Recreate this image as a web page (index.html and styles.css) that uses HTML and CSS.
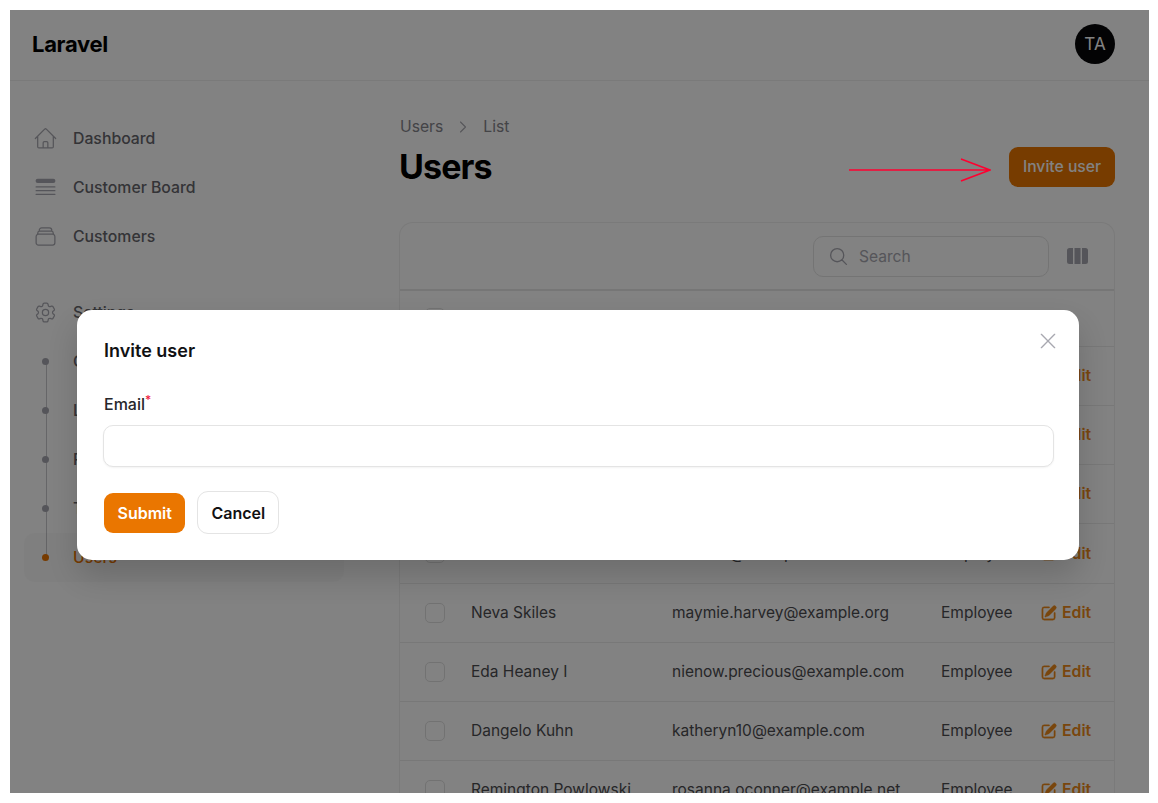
FILE: index.html
```html
<!DOCTYPE html>
<html lang="en">
  <head>
    <meta charset="UTF-8" />
    <meta name="viewport" content="width=device-width, initial-scale=1.0" />
    <title>Users</title>
    <link rel="stylesheet" href="styles.css">
  </head>
  <body>
    <div class="frame">
      <header class="topbar">
        <span class="brand">Laravel</span>
        <span class="avatar">TA</span>
      </header>

      <div class="shell">
        <nav class="sidebar">
          <ul class="nav-group">
            <li class="nav-item">
              <svg class="nav-icon" viewBox="0 0 24 24" fill="none" stroke="currentColor" stroke-width="1.2" stroke-linecap="round" stroke-linejoin="round"><path d="M2.25 12l8.954-8.955c.44-.439 1.152-.439 1.591 0L21.75 12M4.5 9.75v10.125c0 .621.504 1.125 1.125 1.125H9.75v-4.875c0-.621.504-1.125 1.125-1.125h2.25c.621 0 1.125.504 1.125 1.125V21h4.125c.621 0 1.125-.504 1.125-1.125V9.75M8.25 21h8.25"/></svg>
              Dashboard
            </li>
            <li class="nav-item">
              <svg class="nav-icon" viewBox="0 0 24 24" fill="none" stroke="currentColor" stroke-width="1.2" stroke-linecap="round"><rect x="2.5" y="3.5" width="19" height="4.2" rx="2" fill="currentColor" stroke="none"/><path d="M3 11.5h18M3 15h18M3 18.6h18"/></svg>
              Customer Board
            </li>
            <li class="nav-item">
              <svg class="nav-icon" viewBox="0 0 24 24" fill="none" stroke="currentColor" stroke-width="1.2" stroke-linecap="round" stroke-linejoin="round"><path d="M6 6.878V6a2.25 2.25 0 012.25-2.25h7.5A2.25 2.25 0 0118 6v.878m-12 0c.235-.083.487-.128.75-.128h10.5c.263 0 .515.045.75.128m-12 0A2.25 2.25 0 004.5 9v.878m13.5-3A2.25 2.25 0 0119.5 9v.878m0 0a2.246 2.246 0 00-.75-.128H5.25c-.263 0-.515.045-.75.128m15 0A2.25 2.25 0 0121 12v6a2.25 2.25 0 01-2.25 2.25H5.25A2.25 2.25 0 013 18v-6c0-.98.626-1.813 1.5-2.122"/></svg>
              Customers
            </li>
          </ul>

          <ul class="nav-group settings">
            <li class="nav-item">
              <svg class="nav-icon" viewBox="0 0 24 24" fill="none" stroke="currentColor" stroke-width="1.2" stroke-linecap="round" stroke-linejoin="round"><path d="M9.594 3.94c.09-.542.56-.94 1.11-.94h2.593c.55 0 1.02.398 1.11.94l.213 1.281c.063.374.313.686.645.87.074.04.147.083.22.127.324.196.72.257 1.075.124l1.217-.456a1.125 1.125 0 011.37.49l1.296 2.247a1.125 1.125 0 01-.26 1.431l-1.003.827c-.293.24-.438.613-.431.992a6.759 6.759 0 010 .255c-.007.378.138.75.43.99l1.005.828c.424.35.534.954.26 1.43l-1.298 2.247a1.125 1.125 0 01-1.369.491l-1.217-.456c-.355-.133-.75-.072-1.076.124a6.57 6.57 0 01-.22.128c-.331.183-.581.495-.644.869l-.213 1.28c-.09.543-.56.941-1.11.941h-2.594c-.55 0-1.02-.398-1.11-.94l-.213-1.281c-.062-.374-.312-.686-.644-.87a6.52 6.52 0 01-.22-.127c-.325-.196-.72-.257-1.076-.124l-1.217.456a1.125 1.125 0 01-1.369-.49l-1.297-2.247a1.125 1.125 0 01.26-1.431l1.004-.827c.292-.24.437-.613.43-.992a6.932 6.932 0 010-.255c.007-.378-.138-.75-.43-.99l-1.004-.828a1.125 1.125 0 01-.26-1.43l1.297-2.247a1.125 1.125 0 011.37-.491l1.216.456c.356.133.751.072 1.076-.124.072-.044.146-.087.22-.128.332-.183.582-.495.644-.869l.214-1.281z"/><path d="M15 12a3 3 0 11-6 0 3 3 0 016 0z"/></svg>
              Settings
            </li>
            <li>
              <ul class="sub-list">
                <li class="sub-item"><span class="dot"></span>Categories</li>
                <li class="sub-item"><span class="dot"></span>Languages</li>
                <li class="sub-item"><span class="dot"></span>Permissions</li>
                <li class="sub-item"><span class="dot"></span>Teams</li>
                <li class="sub-item active"><span class="dot"></span>Users</li>
              </ul>
            </li>
          </ul>
        </nav>

        <main class="content">
          <div class="crumbs">
            <span>Users</span>
            <svg class="crumb-sep" viewBox="0 0 24 24" fill="none" stroke="currentColor" stroke-width="1.6" stroke-linecap="round" stroke-linejoin="round"><path d="M8.25 4.5l7.5 7.5-7.5 7.5"/></svg>
            <span>List</span>
          </div>
          <div class="page-head">
            <h1>Users</h1>
            <button class="btn btn-primary btn-head">Invite user</button>
          </div>

          <section class="card">
            <div class="toolbar">
              <div class="search">
                <svg class="search-icon" viewBox="0 0 24 24" fill="none" stroke="currentColor" stroke-width="1.5" stroke-linecap="round" stroke-linejoin="round"><path d="M21 21l-5.197-5.197m0 0A7.5 7.5 0 105.196 5.196a7.5 7.5 0 0010.607 10.607z"/></svg>
                <span>Search</span>
              </div>
              <svg class="columns-icon" viewBox="0 0 21 16" fill="currentColor"><path d="M2.5 0H6v16H2.5A2.5 2.5 0 010 13.500V2.500A2.500 2.500 0 012.500 0z"/><rect x="7.500" width="6" height="16"/><path d="M15 0h3.500A2.500 2.500 0 0121 2.500v11a2.500 2.500 0 01-2.500 2.500H15z"/></svg>
            </div>
            <table class="users">
              <colgroup>
                <col class="col-check" />
                <col class="col-name" />
                <col class="col-email" />
                <col class="col-role" />
                <col />
              </colgroup>
              <thead>
                <tr>
                  <th><span class="check"></span></th>
                  <th>Name</th>
                  <th>Email</th>
                  <th>Role</th>
                  <th></th>
                </tr>
              </thead>
              <tbody id="rows"></tbody>
            </table>
          </section>
        </main>
      </div>

      <div class="overlay">
        <div class="modal">
          <div class="modal-head">
            <h2>Invite user</h2>
            <svg class="close" viewBox="0 0 18 18" fill="none" stroke="currentColor" stroke-width="1.5" stroke-linecap="round"><path d="M1.500 1.500l15 15M16.500 1.500l-15 15"/></svg>
          </div>
          <label class="field-label" for="email">Email<sup>*</sup></label>
          <input class="field-input" id="email" type="email" />
          <div class="modal-actions">
            <button class="btn btn-primary">Submit</button>
            <button class="btn btn-plain">Cancel</button>
          </div>
        </div>
      </div>

      <svg class="arrow" viewBox="0 0 142 24" fill="none" stroke="#ff0030" stroke-width="1.6"><path d="M0 12h141M112 1l29 11-29 11"/></svg>
    </div>

    <script>
      const users = [
        ["Alayna Runte", "rolfson.mia@example.com"],
        ["Cecil Hodkiewicz", "ernest.wolf@example.org"],
        ["Jarrod Lesch", "hkoepp@example.net"],
        ["Alden Beer", "kshlerin@example.com"],
        ["Neva Skiles", "maymie.harvey@example.org"],
        ["Eda Heaney I", "nienow.precious@example.com"],
        ["Dangelo Kuhn", "katheryn10@example.com"],
        ["Remington Powlowski", "rosanna.oconner@example.net"],
      ];

      const editIcon =
        '<svg class="edit-icon" viewBox="0 0 20 20" fill="currentColor" stroke="currentColor" stroke-width="0.4"><path d="M5.433 13.917l1.262-3.155A4 4 0 017.58 9.42l6.92-6.918a2.121 2.121 0 013 3l-6.92 6.918c-.383.383-.84.685-1.343.886l-3.154 1.262a.5.5 0 01-.65-.65z"/><path d="M3.500 5.750c0-.69.56-1.250 1.250-1.250H10A.75.75 0 0010 3H4.750A2.750 2.750 0 002 5.750v9.500A2.750 2.750 0 004.750 18h9.500A2.750 2.750 0 0017 15.250V10a.75.75 0 00-1.500 0v5.250c0 .69-.56 1.250-1.250 1.250h-9.500c-.69 0-1.250-.56-1.250-1.250v-9.500z"/></svg>';

      document.getElementById("rows").innerHTML = users
        .map(
          (u) => `<tr>
            <td><span class="check"></span></td>
            <td>${u[0]}</td>
            <td>${u[1]}</td>
            <td>Employee</td>
            <td><span class="edit">${editIcon}Edit</span></td>
          </tr>`
        )
        .join("");
    </script>
  </body>
</html>
```

FILE: styles.css
```css
* {
  box-sizing: border-box;
}

html,
body {
  height: 100%;
}

body {
  margin: 0;
  padding: 10px 9px 10px 10px;
  background-color: #ffffff;
  font-family: Inter, "Liberation Sans", sans-serif;
  font-size: 16px;
  color: #4c4c50;
  overflow: hidden;
}

ul {
  list-style: none;
  margin: 0;
  padding: 0;
}

.frame {
  position: relative;
  height: 100%;
  overflow: hidden;
  background-color: #ffffff;
}

.topbar {
  height: 71px;
  display: flex;
  align-items: center;
  justify-content: space-between;
  padding: 0 34px 2px 22px;
  border-bottom: 1px solid #f0f0f0;
}

.brand {
  font-size: 22px;
  font-weight: 700;
  letter-spacing: -0.3px;
  color: #000000;
}

.avatar {
  width: 40px;
  height: 40px;
  border-radius: 50%;
  background-color: #060609;
  color: #ffffff;
  display: flex;
  align-items: center;
  justify-content: center;
  font-size: 17px;
}

.shell {
  display: flex;
}

.sidebar {
  width: 364px;
  flex-shrink: 0;
  padding: 33px 30px 0 14px;
}

.nav-item {
  height: 49px;
  display: flex;
  align-items: center;
  gap: 15px;
  padding-left: 9px;
  font-size: 15.8px;
  font-weight: 500;
  color: #66666c;
}

.nav-icon {
  width: 25px;
  height: 25px;
  color: #a8a8b0;
}

.settings {
  margin-top: 27px;
}

.sub-list {
  background: linear-gradient(#c8c8cc, #c8c8cc) no-repeat 21.5px 24px / 1px 196px;
}

.sub-item {
  height: 49px;
  display: flex;
  align-items: center;
  gap: 24px;
  padding-left: 18px;
  font-size: 15.8px;
  font-weight: 500;
  color: #66666c;
}

.dot {
  width: 7px;
  height: 7px;
  border-radius: 50%;
  background-color: #a8a8b0;
}

.sub-item.active {
  border-radius: 10px;
  background-color: rgba(0, 0, 0, 0.02);
  color: #e97400;
}

.sub-item.active .dot {
  background-color: #e97400;
}

.content {
  flex: 1;
  padding: 34px 34px 0 25px;
}

.crumbs {
  display: flex;
  align-items: center;
  gap: 12px;
  line-height: 24px;
  font-size: 15.7px;
  color: #85858c;
  padding-left: 1px;
}

.crumb-sep {
  width: 16px;
  height: 16px;
  color: #a8a8b0;
}

.page-head {
  margin-top: 7px;
  display: flex;
  align-items: center;
  justify-content: space-between;
}

h1 {
  margin: 0;
  font-size: 34px;
  font-weight: 700;
  letter-spacing: -0.9px;
  color: #000000;
}

.btn {
  height: 40px;
  padding: 0 13.5px;
  border: none;
  border-radius: 9px;
  font-family: inherit;
  font-size: 16px;
  font-weight: 600;
}

.btn-primary {
  background-color: #ea7600;
  color: #ffffff;
}

.btn-head {
  width: 106px;
  padding: 0;
  font-size: 15.7px;
  font-weight: 500;
}

.btn-plain {
  height: 43px;
  padding: 0 13px;
  background-color: #ffffff;
  border: 1.5px solid #e4e4e4;
  border-radius: 11px;
  color: #111113;
}

.card {
  margin-top: 35px;
  border: 1px solid #f0f0f0;
  border-bottom: none;
  border-radius: 14px 14px 0 0;
}

.toolbar {
  height: 68px;
  display: flex;
  align-items: center;
  justify-content: flex-end;
  gap: 18px;
  padding-right: 26px;
  border-bottom: 2px solid #e8e8e8;
}

.search {
  width: 236px;
  height: 41px;
  display: flex;
  align-items: center;
  gap: 10px;
  padding-left: 14px;
  border: 1.5px solid #e4e4e4;
  border-radius: 10px;
  font-size: 15.6px;
  color: #a8a8b0;
}

.search-icon {
  width: 21px;
  height: 21px;
}

.columns-icon {
  width: 21px;
  height: 16px;
  color: #a8a8b0;
}

.users {
  width: 100%;
  table-layout: fixed;
  border-collapse: collapse;
  font-size: 15.5px;
}

.col-check {
  width: 71px;
}

.col-name {
  width: 201px;
}

.col-email {
  width: 269px;
}

.col-role {
  width: 100px;
}

.users th,
.users td {
  padding: 0;
  text-align: left;
  font-weight: 400;
  white-space: nowrap;
  border-bottom: 1px solid #ececec;
}

.users th {
  height: 55px;
}

.users td {
  height: 59px;
}

.users tr:nth-child(4) td {
  height: 60px;
}

.users th:first-child,
.users td:first-child {
  padding-left: 25px;
}

.check {
  display: block;
  width: 20px;
  height: 20px;
  border: 1.5px solid #e0e0e0;
  border-radius: 5px;
}

.edit {
  display: flex;
  align-items: center;
  gap: 4px;
  margin-left: -1px;
  font-size: 15.8px;
  font-weight: 600;
  color: #ee8a1a;
}

.edit-icon {
  width: 18px;
  height: 18px;
}

.overlay {
  position: absolute;
  inset: 0;
  padding: 300px 70px 0 67px;
  background-color: rgba(0, 0, 0, 0.49);
}

.modal {
  height: 250px;
  padding: 28px 27px 0;
  background-color: #ffffff;
  border-radius: 15px;
  box-shadow: 0 16px 30px rgba(0, 0, 0, 0.16);
}

.modal-head {
  display: flex;
  align-items: flex-start;
  justify-content: space-between;
}

h2 {
  margin: 0;
  font-size: 18px;
  line-height: 26px;
  font-weight: 600;
  color: #111113;
}

.close {
  width: 16px;
  height: 16px;
  margin: -5px -4px 0 0;
  color: #a8a8b0;
}

.field-label {
  display: block;
  margin-top: 28px;
  line-height: 24px;
  font-weight: 500;
  color: #26262a;
}

.field-label sup {
  color: #f0223f;
  font-size: 12px;
  line-height: 0;
  vertical-align: 6px;
}

.field-input {
  display: block;
  width: 951px;
  height: 42px;
  margin: 9px 0 0 -1px;
  border: 1.5px solid #e4e4e4;
  border-radius: 10px;
  background-color: #ffffff;
  box-shadow: 0 1px 2px rgba(0, 0, 0, 0.05);
}

.modal-actions {
  margin-top: 24px;
  display: flex;
  align-items: center;
  gap: 12px;
}

.arrow {
  position: absolute;
  left: 839px;
  top: 148px;
  width: 142px;
  height: 24px;
}
```
